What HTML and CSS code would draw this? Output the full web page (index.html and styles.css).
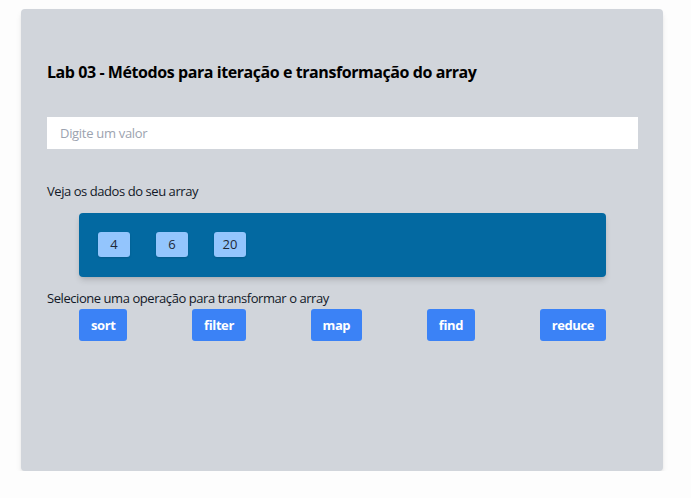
FILE: index.html
```html
<!DOCTYPE html>
<html lang="pt">
<head>
<meta charset="utf-8">
<link rel="stylesheet" href="styles.css">
</head>
<body>
<main class="card">
  <h1 class="title">Lab 03 - Métodos para iteração e transformação do array</h1>
  <input class="value-input" type="text" placeholder="Digite um valor">
  <p class="label label-data">Veja os dados do seu array</p>
  <div class="array-box">
    <span class="chip">4</span>
    <span class="chip">6</span>
    <span class="chip">20</span>
  </div>
  <p class="label label-ops">Selecione uma operação para transformar o array</p>
  <div class="ops">
    <button class="op">sort</button>
    <button class="op">filter</button>
    <button class="op">map</button>
    <button class="op">find</button>
    <button class="op">reduce</button>
  </div>
</main>
</body>
</html>
```

FILE: styles.css
```css
* { box-sizing: border-box; }
html, body { margin: 0; background: #fdfdfd; }
body {
  padding: 9px 28px 0 21px;
  font-family: "Open Sans", "Noto Sans", sans-serif;
  color: #111827;
}
.card {
  width: 642px;
  height: 462px;
  background: #d1d5db;
  border-radius: 4px;
  box-shadow: 0 4px 6px -1px rgba(0,0,0,0.1), 0 2px 4px -2px rgba(0,0,0,0.1);
  padding: 51px 25px 0 26px;
  display: flex;
  flex-direction: column;
}
.title {
  margin: 0;
  font-size: 16px;
  line-height: 24px;
  font-weight: 700;
  letter-spacing: -0.43px;
  color: #000;
}
.value-input {
  margin-top: 33px;
  height: 32px;
  border: none;
  outline: none;
  background: #fff;
  padding: 0 13px;
  font-family: inherit;
  font-size: 13px;
  letter-spacing: -0.3px;
  color: #111827;
}
.value-input::placeholder { color: #9ca3af; }
.label {
  margin: 0;
  font-size: 13px;
  line-height: 18px;
  color: #111827;
  letter-spacing: -0.44px;
}
.label-data { margin-top: 33px; }
.array-box {
  margin: 13px 32px 0;
  height: 64px;
  background: #0369a1;
  border-radius: 4px;
  box-shadow: 0 4px 6px -1px rgba(0,0,0,0.15), 0 2px 4px -2px rgba(0,0,0,0.1);
  display: flex;
  align-items: flex-start;
  gap: 26px;
  padding: 19px 19px;
}
.chip {
  min-width: 32px;
  height: 25px;
  padding: 0 8px 1px;
  background: #93c5fd;
  border-radius: 3px;
  box-shadow: 0 1px 2px rgba(0,0,0,0.15);
  display: flex;
  align-items: center;
  justify-content: center;
  font-size: 13px;
  color: #1f2937;
}
.label-ops { margin-top: 12px; }
.ops {
  margin: 2px 32px 0;
  display: flex;
  justify-content: space-between;
}
.op {
  height: 32px;
  padding: 0 12px 1px;
  border: none;
  border-radius: 3px;
  background: #3b82f6;
  color: #fff;
  font-family: inherit;
  font-size: 13px;
  font-weight: 700;
  letter-spacing: -0.4px;
}
```
